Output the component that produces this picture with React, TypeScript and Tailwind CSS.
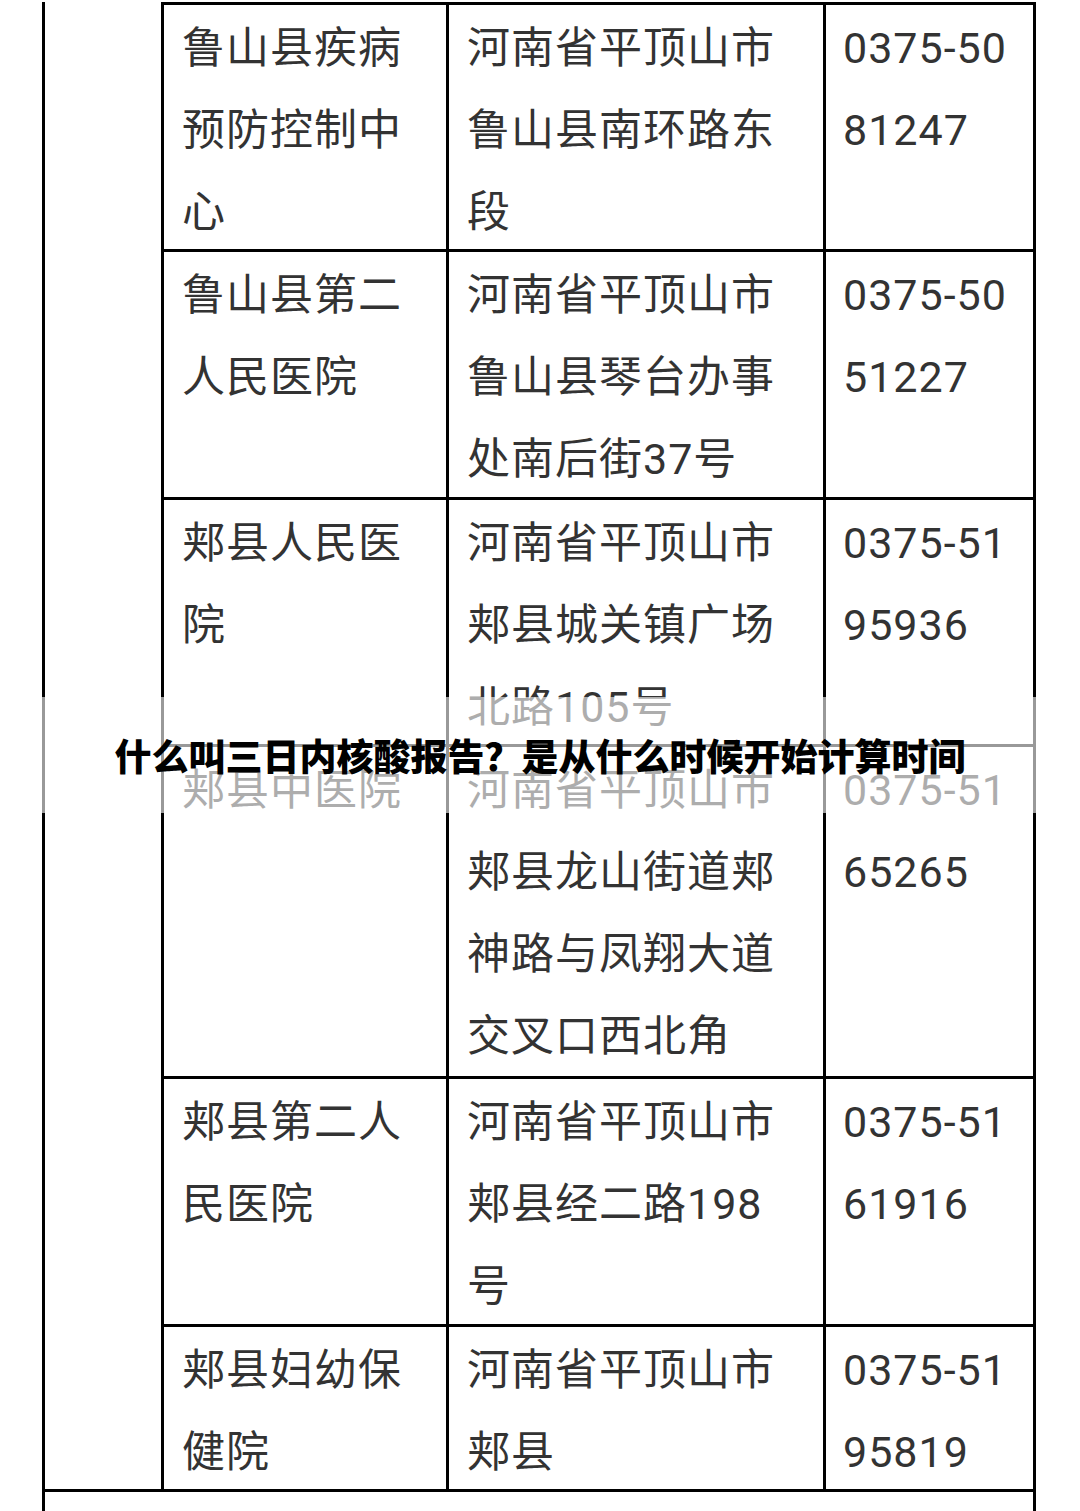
const rows = [
  {
    height: "h-[247px]",
    name: ["鲁山县疾病", "预防控制中", "心"],
    address: ["河南省平顶山市", "鲁山县南环路东", "段"],
    phone: ["0375-50", "81247"],
  },
  {
    height: "h-[248px]",
    name: ["鲁山县第二", "人民医院"],
    address: ["河南省平顶山市", "鲁山县琴台办事", "处南后街37号"],
    phone: ["0375-50", "51227"],
  },
  {
    height: "h-[247px]",
    name: ["郏县人民医", "院"],
    address: ["河南省平顶山市", "郏县城关镇广场", "北路105号"],
    phone: ["0375-51", "95936"],
  },
  {
    height: "h-[332px]",
    name: ["郏县中医院"],
    address: ["河南省平顶山市", "郏县龙山街道郏", "神路与凤翔大道", "交叉口西北角"],
    phone: ["0375-51", "65265"],
  },
  {
    height: "h-[248px]",
    name: ["郏县第二人", "民医院"],
    address: ["河南省平顶山市", "郏县经二路198", "号"],
    phone: ["0375-51", "61916"],
  },
  {
    height: "h-[165px]",
    name: ["郏县妇幼保", "健院"],
    address: ["河南省平顶山市", "郏县"],
    phone: ["0375-51", "95819"],
  },
];

function Lines({ lines }: { lines: string[] }) {
  return (
    <>
      {lines.map((line) => (
        <div key={line} className="whitespace-nowrap">
          {line}
        </div>
      ))}
    </>
  );
}

export default function App() {
  return (
    <div
      className="relative h-[1511px] w-[1080px] overflow-hidden bg-white pt-[2px] text-[43px] leading-[82px] tracking-[1px] text-[#333]"
      style={{ fontFamily: 'Roboto, "Noto Sans CJK SC", sans-serif' }}
    >
      <div className="ml-[42px] w-[994px]">
        <div className="flex">
          <div className="w-[119px] shrink-0 border-l-[3px] border-black" />
          <div className="w-[875px] shrink-0 border-x-[3px] border-black">
            {rows.map((row) => (
              <div
                key={row.name.join("")}
                className={`flex box-border border-t-[3px] border-black ${row.height}`}
              >
                <div className="w-[282px] shrink-0 pl-[18px] pt-[2px]">
                  <Lines lines={row.name} />
                </div>
                <div className="w-[377px] shrink-0 border-l-[3px] border-black pl-[18px] pt-[2px]">
                  <Lines lines={row.address} />
                </div>
                <div className="w-[210px] shrink-0 border-l-[3px] border-black pl-[17px] pt-[2px]">
                  <Lines lines={row.phone} />
                </div>
              </div>
            ))}
          </div>
        </div>
        <div className="h-[40px] border-x-[3px] border-t-[3px] border-black" />
      </div>

      <div className="absolute left-0 right-0 top-[697px] flex h-[116px] items-center justify-center bg-white/60">
        <h1
          className="text-[37px] font-black leading-none tracking-normal text-black"
          style={{ fontFamily: '"Noto Sans CJK SC", sans-serif' }}
        >
          什么叫三日内核酸报告？是从什么时候开始计算时间
        </h1>
      </div>
    </div>
  );
}
